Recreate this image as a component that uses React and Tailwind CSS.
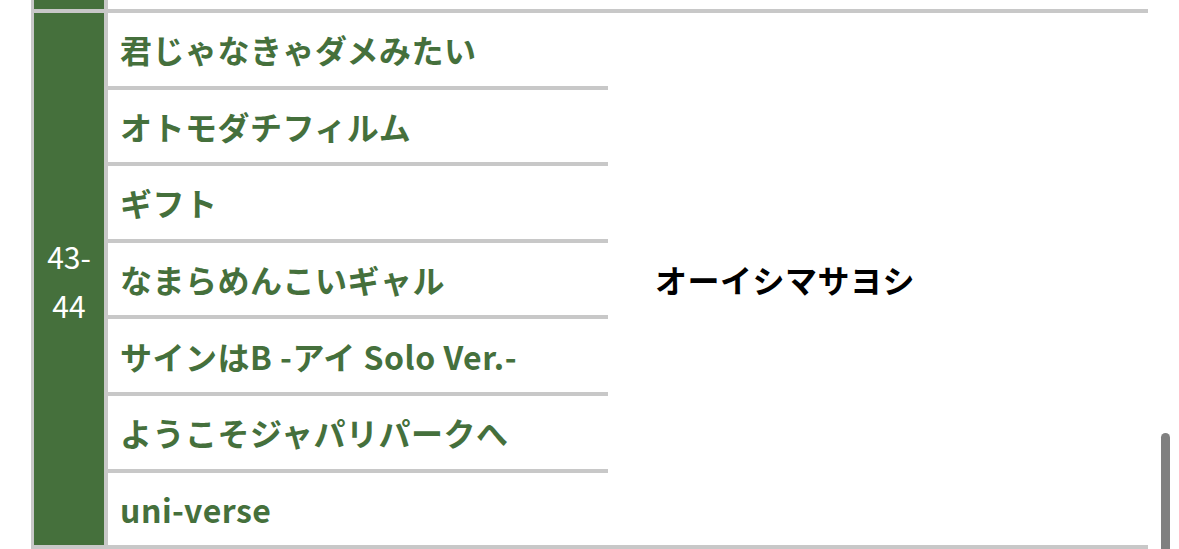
import React from 'react';

const songs = [
  '君じゃなきゃダメみたい',
  'オトモダチフィルム',
  'ギフト',
  'なまらめんこいギャル',
  'サインはB -アイ Solo Ver.-',
  'ようこそジャパリパークへ',
  'uni-verse',
];

const font = { fontFamily: '"Noto Sans CJK JP", sans-serif' };

export default function App() {
  return (
    <div className="relative h-[549px] w-full overflow-hidden bg-white" style={font}>
      <div className="ml-[31px] w-[1117px]">
        {/* tail of previous row */}
        <div className="flex h-[9px]">
          <div className="w-[3px] bg-[#c8c8c8]" />
          <div className="w-[70px] bg-[#45703c]" />
          <div className="w-[4px] bg-[#c8c8c8]" />
        </div>
        <div className="h-[4px] bg-[#c8c8c8]" />

        <div className="flex">
          <div className="w-[3px] bg-[#c8c8c8]" />
          <div className="flex w-[70px] flex-col items-center justify-center bg-[#45703c] pt-[4px] text-[30px] leading-[49px] text-white">
            <span>43-</span>
            <span>44</span>
          </div>
          <div className="w-[4px] bg-[#c8c8c8]" />

          <div className="flex w-[500px] flex-col">
            {songs.map((s, i) => (
              <div
                key={s}
                className={
                  i < songs.length - 1
                    ? 'flex h-[76.6px] items-center border-b-4 border-[#c8c8c8] pl-[12px] text-[32px] font-bold tracking-[0.5px] text-[#45703c]'
                    : 'flex h-[72.6px] items-center pl-[12px] text-[32px] font-bold tracking-[0.5px] text-[#45703c]'
                }
              >
                {s}
              </div>
            ))}
          </div>

          <div className="flex flex-1 items-center pl-[47px] text-[32px] font-bold tracking-[0.5px] text-black">
            オーイシマサヨシ
          </div>
        </div>
        <div className="h-[4px] bg-[#c8c8c8]" />
      </div>

      {/* scroll indicator */}
      <div className="absolute left-[1161px] top-[433px] h-[140px] w-[9px] rounded-full bg-[#808080]" />
    </div>
  );
}
